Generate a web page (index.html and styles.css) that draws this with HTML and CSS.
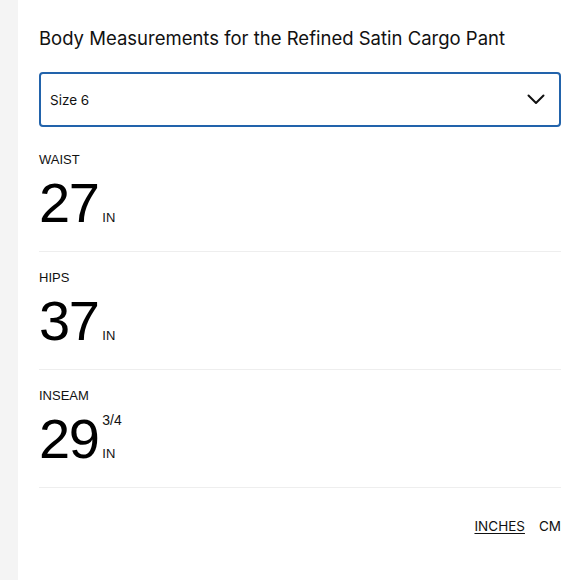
FILE: index.html
```html
<!DOCTYPE html>
<html lang="en">
<head>
<meta charset="utf-8">
<title>Body Measurements</title>
<link rel="stylesheet" href="styles.css">
</head>
<body>
<div class="page">
  <aside class="strip"></aside>
  <main class="panel">
    <h1 class="title">Body Measurements for the Refined Satin Cargo Pant</h1>
    <div class="select">
      <span class="select-value">Size 6</span>
      <svg class="chevron" width="18" height="11" viewBox="0 0 18 11" aria-hidden="true"><path d="M1.5 1.5 L9 9 L16.5 1.5" fill="none" stroke="#111" stroke-width="2" stroke-linecap="round" stroke-linejoin="round"/></svg>
    </div>
    <div class="measures">
      <section class="measure">
        <div class="label">WAIST</div>
        <div class="value-row">
          <span class="number">27</span>
          <span class="unit-col"><span class="unit">IN</span></span>
        </div>
      </section>
      <section class="measure">
        <div class="label">HIPS</div>
        <div class="value-row">
          <span class="number">37</span>
          <span class="unit-col"><span class="unit">IN</span></span>
        </div>
      </section>
      <section class="measure">
        <div class="label">INSEAM</div>
        <div class="value-row">
          <span class="number">29</span>
          <span class="unit-col"><span class="fraction">3/4</span><span class="unit">IN</span></span>
        </div>
      </section>
    </div>
    <div class="toggle">
      <span class="toggle-item active">INCHES</span>
      <span class="toggle-item">CM</span>
    </div>
  </main>
</div>
</body>
</html>
```

FILE: styles.css
```css
html, body {
  margin: 0;
  padding: 0;
  background: #ffffff;
  color: #111111;
}
.page {
  display: flex;
  min-height: 580px;
}
.strip {
  width: 18px;
  flex: none;
  background: #f4f4f4;
}
.panel {
  flex: 1;
  padding: 26px 19px 0 21px;
}
.title {
  margin: 0;
  font-family: Inter, "Noto Sans", sans-serif;
  font-weight: 400;
  font-size: 18.5px;
  line-height: 24px;
  letter-spacing: 0;
}
.select {
  margin-top: 22px;
  height: 55px;
  box-sizing: border-box;
  border: 2px solid #2263ab;
  border-radius: 4px;
  display: flex;
  align-items: center;
  justify-content: space-between;
  padding: 0 14px 0 9px;
}
.select-value {
  font-family: Inter, "Liberation Sans", sans-serif;
  font-size: 13.5px;
  line-height: 16px;
}
.chevron {
  display: block;
}
.measures {
  margin-top: 7px;
}
.measure {
  padding: 18px 0 20px;
  border-bottom: 1px solid #eeeeee;
}
.label {
  font-family: "Liberation Sans", Arial, sans-serif;
  font-size: 13px;
  line-height: 16px;
}
.value-row {
  margin-top: 7px;
  display: flex;
  align-items: flex-end;
}
.number {
  font-family: "Liberation Sans", Arial, sans-serif;
  font-size: 56px;
  line-height: 56px;
  letter-spacing: -1.5px;
  color: #000;
}
.unit-col {
  display: flex;
  flex-direction: column;
  margin-left: 4px;
  padding-bottom: 6px;
  font-family: "Liberation Sans", Arial, sans-serif;
  font-size: 13px;
  line-height: 14px;
}
.fraction {
  font-size: 14px;
  margin-bottom: 20px;
}
.toggle {
  margin-top: 30px;
  display: flex;
  justify-content: flex-end;
  gap: 14px;
  font-family: Inter, "Noto Sans", sans-serif;
  font-size: 13.5px;
  line-height: 16px;
}
.toggle-item.active {
  text-decoration: underline;
  text-underline-offset: 2px;
}
```
